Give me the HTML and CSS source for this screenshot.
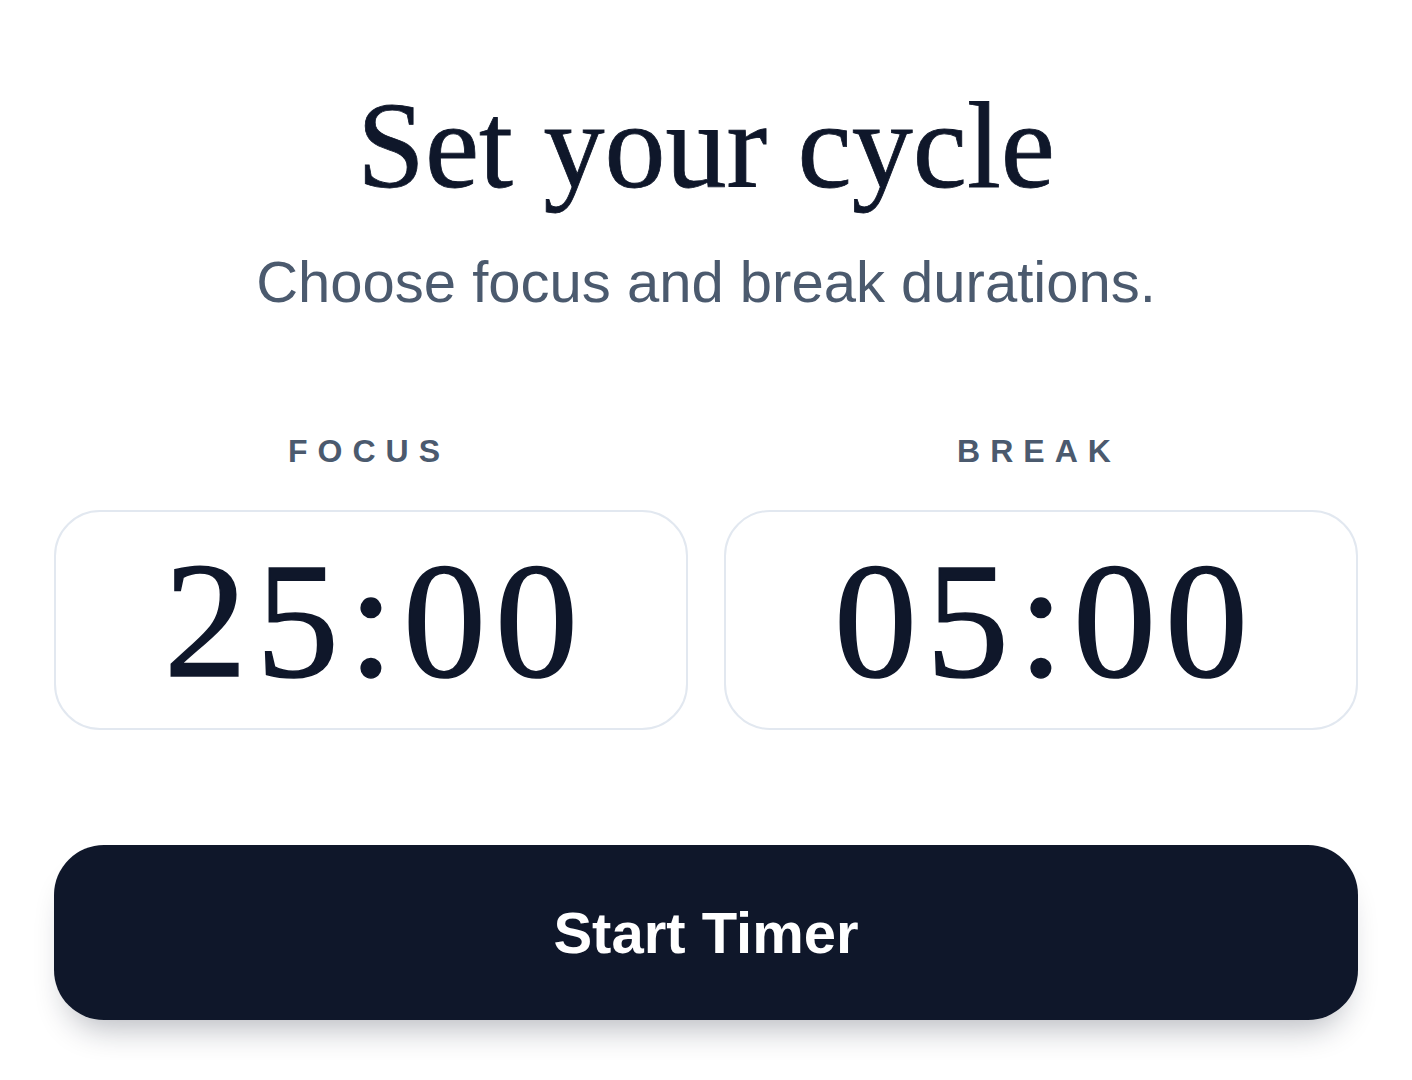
FILE: index.html
```html
<!DOCTYPE html>
<html lang="en">
<head>
  <meta charset="UTF-8">
  <meta name="viewport" content="width=device-width, initial-scale=1.0">
  <title>Set your cycle</title>
  <link rel="stylesheet" href="styles.css">
</head>
<body>

  <div class="container">
    <h1 class="title">Set your cycle</h1>
    <p class="subtitle">Choose focus and break durations.</p>

    <!-- Duration pickers -->
    <div class="durations">
      <div class="duration">
        <div class="label">FOCUS</div>
        <div class="time-box">25:00</div>
      </div>
      <div class="duration">
        <div class="label">BREAK</div>
        <div class="time-box">05:00</div>
      </div>
    </div>

    <button class="start-btn">Start Timer</button>
  </div>

</body>
</html>
```

FILE: styles.css
```css
/* Base */
body {
  margin: 0;
  padding: 0;
  background-color: #ffffff;
  color: #0f172a;
  font-family: 'Liberation Sans', Arial, sans-serif;
}

.container {
  padding: 85px 54px 40px;
  display: flex;
  flex-direction: column;
  align-items: center;
}

.title {
  margin: 0;
  font-family: 'Liberation Serif', 'Times New Roman', serif;
  font-weight: 400;
  font-size: 122px;
  line-height: 1;
  color: #0f172a;
  -webkit-text-stroke: 0.8px #0f172a;
}

.subtitle {
  margin: 46px 0 0;
  font-size: 58px;
  line-height: 1;
  color: #4b5a6e;
}

/* Durations */
.durations {
  margin-top: 124px;
  width: 100%;
  display: grid;
  grid-template-columns: 1fr 1fr;
  gap: 36px;
}

.duration {
  display: flex;
  flex-direction: column;
  align-items: center;
}

.label {
  font-size: 32px;
  line-height: 1;
  font-weight: 700;
  letter-spacing: 10px;
  padding-left: 6px;
  margin-right: 10px;
  color: #4b5a6e;
}

.time-box {
  margin-top: 43px;
  box-sizing: border-box;
  width: 100%;
  height: 220px;
  padding-left: 9px;
  border: 2px solid #e2e8f0;
  border-radius: 46px;
  display: flex;
  align-items: center;
  justify-content: center;
  font-family: 'Liberation Serif', 'Times New Roman', serif;
  font-size: 166px;
  letter-spacing: 9px;
  line-height: 1;
  color: #0f172a;
  -webkit-text-stroke: 1.5px #0f172a;
}

/* Button */
.start-btn {
  margin-top: 115px;
  width: 100%;
  height: 175px;
  border: none;
  border-radius: 50px;
  background-color: #0f172a;
  color: #ffffff;
  font-family: 'Liberation Sans', Arial, sans-serif;
  font-size: 58px;
  font-weight: 700;
  cursor: pointer;
  box-shadow: 0 22px 32px -14px rgba(15, 23, 42, 0.3);
}

.start-btn:hover {
  background-color: #1e293b;
}
```
